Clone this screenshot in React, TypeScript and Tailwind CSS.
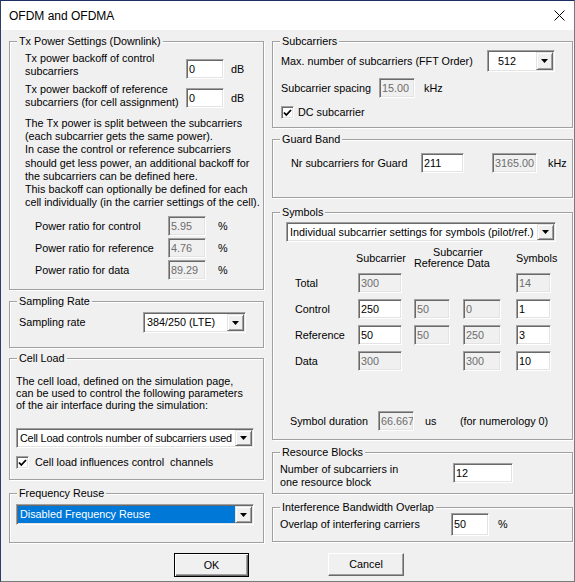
import React from 'react'

const sunken =
  'border border-t-[#a0a0a0] border-l-[#a0a0a0] border-r-white border-b-white shadow-[inset_1px_1px_0_#696969,inset_-1px_-1px_0_#e3e3e3]'
const raised =
  'border border-t-[#e3e3e3] border-l-[#e3e3e3] border-r-[#696969] border-b-[#696969] shadow-[inset_1px_1px_0_#fff,inset_-1px_-1px_0_#a0a0a0]'

type FieldProps = { value: string; className: string; disabled?: boolean }

const Field = ({ value, className, disabled }: FieldProps) => (
  <div
    className={`${sunken} ${className} ${
      disabled ? 'bg-[#f0f0f0] text-[#6d6d6d]' : 'bg-white text-black'
    } flex shrink-0 items-center overflow-hidden whitespace-nowrap pl-[2px]`}
  >
    {value}
  </div>
)

type ComboProps = { value: string; className: string; textClass?: string; selected?: boolean }

const Combo = ({ value, className, textClass = 'pl-[2px]', selected }: ComboProps) => (
  <div className={`${sunken} ${className} flex shrink-0 bg-white p-[1px]`}>
    <div
      className={`flex flex-1 items-center overflow-hidden whitespace-nowrap ${textClass} ${
        selected ? 'bg-[#0078d7] text-white' : ''
      }`}
    >
      {value}
    </div>
    <div className={`${raised} flex w-[17px] items-center justify-center bg-[#f0f0f0]`}>
      <svg width="7" height="4" viewBox="0 0 7 4">
        <path d="M0 0h7L3.5 4z" fill="#000" />
      </svg>
    </div>
  </div>
)

const Check = () => (
  <div className={`${sunken} flex h-[13px] w-[13px] shrink-0 items-center justify-center bg-white`}>
    <svg width="9" height="8" viewBox="0 0 9 8">
      <path d="M1 3.5l2.3 2.5L8 1" fill="none" stroke="#000" strokeWidth="1.8" />
    </svg>
  </div>
)

type GroupProps = { title: string; className: string; children?: React.ReactNode }

const Group = ({ title, className, children }: GroupProps) => (
  <div
    className={`relative shrink-0 border border-[#a0a0a0] shadow-[inset_1px_1px_0_#fff,1px_1px_0_#fff] ${className}`}
  >
    <span className="absolute -top-[7px] left-[7px] whitespace-nowrap bg-[#f0f0f0] px-[2px] leading-[13px]">
      {title}
    </span>
    {children}
  </div>
)

const powerRows = [
  ['Power ratio for control', '5.95'],
  ['Power ratio for reference', '4.76'],
  ['Power ratio for data', '89.29'],
]

const App = () => {
  return (
    <div className="flex h-[582px] w-[575px] flex-col overflow-hidden border border-t-[#1c2f63] border-l-[#2e3d66] border-r-[#7a7a7a] border-b-[#7a7a7a] bg-[#f0f0f0] font-['Liberation_Sans',Arial,sans-serif] text-[10.8px] text-black">
      {/* title bar */}
      <div className="flex h-[29px] shrink-0 items-center justify-between bg-white pl-[8px] pr-[9px]">
        <span className="text-[12px]">OFDM and OFDMA</span>
        <svg width="11" height="11" viewBox="0 0 11 11">
          <path d="M0.5 0.5l10 10M10.5 0.5l-10 10" stroke="#000" strokeWidth="1" />
        </svg>
      </div>

      <div className="flex gap-[8px] pl-[8px]">
        {/* left column */}
        <div className="flex w-[255px] flex-col">
          <Group title="Tx Power Settings (Downlink)" className="mt-[11px] h-[249px] pl-[15px] pt-[10px]">
            <div className="flex">
              <div className="w-[161px] whitespace-nowrap leading-[13px]">
                Tx power backoff of control
                <br />
                subcarriers
              </div>
              <div className="mt-[7px] flex items-center">
                <Field value="0" className="h-[20px] w-[38px]" />
                <span className="ml-[7px]">dB</span>
              </div>
            </div>
            <div className="mt-[4px] flex">
              <div className="w-[161px] whitespace-nowrap leading-[13px]">
                Tx power backoff of reference
                <br />
                subcarriers (for cell assignment)
              </div>
              <div className="mt-[4px] flex items-center">
                <Field value="0" className="h-[20px] w-[38px]" />
                <span className="ml-[7px]">dB</span>
              </div>
            </div>
            <p className="mt-[8px] whitespace-nowrap leading-[13.2px]">
              The Tx power is split between the subcarriers
              <br />
              (each subcarrier gets the same power).
              <br />
              In case the control or reference subcarriers
              <br />
              should get less power, an additional backoff for
              <br />
              the subcarriers can be defined here.
              <br />
              This backoff can optionally be defined for each
              <br />
              cell individually (in the carrier settings of the cell).
            </p>
            <div className="mt-[7px] flex flex-col gap-[2px]">
              {powerRows.map(([label, value]) => (
                <div key={label} className="flex h-[20px] items-center">
                  <span className="ml-[10px] w-[133px] whitespace-nowrap">{label}</span>
                  <Field value={value} disabled className="h-[20px] w-[38px]" />
                  <span className="ml-[12px]">%</span>
                </div>
              ))}
            </div>
          </Group>

          <Group title="Sampling Rate" className="mt-[11px] h-[47px] pl-[9px] pt-[10px]">
            <div className="flex items-center">
              <span className="w-[124px]">Sampling rate</span>
              <Combo value="384/250 (LTE)" className="h-[21px] w-[103px]" />
            </div>
          </Group>

          <Group title="Cell Load" className="mt-[10px] h-[122px] pl-[6px] pt-[16px]">
            <p className="whitespace-nowrap leading-[12px]">
              The cell load, defined on the simulation page,
              <br />
              can be used to control the following parameters
              <br />
              of the air interface during the simulation:
            </p>
            <Combo
              value="Cell Load controls number of subcarriers used"
              textClass="pl-[2px] tracking-[-0.2px]"
              className="mt-[17px] h-[20px] w-[238px]"
            />
            <div className="mt-[8px] flex h-[13px] items-center">
              <Check />
              <span className="ml-[6px] whitespace-pre">Cell load influences control  channels</span>
            </div>
          </Group>

          <Group title="Frequency Reuse" className="mt-[13px] h-[50px] pl-[6px] pt-[10px]">
            <Combo value="Disabled Frequency Reuse" selected className="h-[21px] w-[238px]" />
          </Group>
        </div>

        {/* right column */}
        <div className="flex w-[301px] flex-col">
          <Group title="Subcarriers" className="mt-[11px] h-[87px] pl-[8px] pt-[8px]">
            <div className="flex items-center">
              <span className="w-[206px] whitespace-nowrap">Max. number of subcarriers (FFT Order)</span>
              <Combo value="512" textClass="pl-[9px]" className="h-[22px] w-[68px]" />
            </div>
            <div className="mt-[6px] flex items-center">
              <span className="w-[98px] whitespace-nowrap">Subcarrier spacing</span>
              <Field value="15.00" disabled className="h-[20px] w-[36px]" />
              <span className="ml-[9px]">kHz</span>
            </div>
            <div className="mt-[8px] flex h-[13px] items-center">
              <Check />
              <span className="ml-[4px]">DC subcarrier</span>
            </div>
          </Group>

          <Group title="Guard Band" className="mt-[11px] h-[59px] pl-[18px] pt-[13px]">
            <div className="flex items-center">
              <span className="w-[130px] whitespace-nowrap">Nr subcarriers for Guard</span>
              <Field value="211" className="h-[20px] w-[43px]" />
              <Field value="3165.00" disabled className="ml-[28px] h-[20px] w-[45px]" />
              <span className="ml-[11px]">kHz</span>
            </div>
          </Group>

          <Group title="Symbols" className="mt-[14px] h-[228px] pt-[9px]">
            <Combo
              value="Individual subcarrier settings for symbols (pilot/ref.)"
              className="ml-[13px] h-[20px] w-[270px]"
            />
            <div className="ml-[22px] mt-[5px] grid h-[22px] grid-cols-[63px_56px_49px_53px_35px] items-center">
              <div />
              <div className="-ml-[2px]">Subcarrier</div>
              <div className="col-span-2 leading-[11px]">
                <div className="pl-[19px]">Subcarrier</div>
                <div className="flex">
                  <span className="w-[53px]">Reference</span>
                  <span>Data</span>
                </div>
              </div>
              <div>Symbols</div>
            </div>
            <div className="ml-[22px] mt-[4px] grid grid-cols-[63px_56px_49px_53px_35px] grid-rows-[20px_20px_20px_20px] items-center gap-y-[6px]">
              <span>Total</span>
              <Field value="300" disabled className="h-[20px] w-[44px]" />
              <div />
              <div />
              <Field value="14" disabled className="h-[20px] w-[35px]" />

              <span>Control</span>
              <Field value="250" className="h-[20px] w-[44px]" />
              <Field value="50" disabled className="h-[20px] w-[36px]" />
              <Field value="0" disabled className="h-[20px] w-[38px]" />
              <Field value="1" className="h-[20px] w-[35px]" />

              <span>Reference</span>
              <Field value="50" className="h-[20px] w-[44px]" />
              <Field value="50" disabled className="h-[20px] w-[36px]" />
              <Field value="250" disabled className="h-[20px] w-[38px]" />
              <Field value="3" className="h-[20px] w-[35px]" />

              <span>Data</span>
              <Field value="300" disabled className="h-[20px] w-[44px]" />
              <div />
              <Field value="300" disabled className="h-[20px] w-[38px]" />
              <Field value="10" className="h-[20px] w-[35px]" />
            </div>
            <div className="ml-[17px] mt-[40px] flex items-center">
              <span className="w-[88px] whitespace-nowrap">Symbol duration</span>
              <Field value="66.667" disabled className="h-[20px] w-[36px]" />
              <span className="ml-[11px] w-[35px]">us</span>
              <span className="whitespace-nowrap">(for numerology 0)</span>
            </div>
          </Group>

          <Group title="Resource Blocks" className="mt-[12px] h-[42px] pl-[7px] pt-[10px]">
            <div className="flex items-start">
              <div className="w-[173px] whitespace-nowrap leading-[13px]">
                Number of subcarriers in
                <br />
                one resource block
              </div>
              <Field value="12" className="h-[20px] w-[60px]" />
            </div>
          </Group>

          <Group title="Interference Bandwidth Overlap" className="mt-[13px] h-[35px] pl-[7px] pt-[5px]">
            <div className="flex items-center">
              <span className="w-[171px] whitespace-nowrap">Overlap of interfering carriers</span>
              <Field value="50" className="h-[23px] w-[38px]" />
              <span className="ml-[9px]">%</span>
            </div>
          </Group>
        </div>
      </div>

      {/* buttons */}
      <div className="mt-[10px] flex pl-[173px]">
        <button className="flex h-[24px] w-[75px] items-center justify-center border border-black bg-[#f0f0f0] shadow-[inset_1px_1px_0_#fff,inset_-1px_-1px_0_#696969,inset_-2px_-2px_0_#a0a0a0]">
          OK
        </button>
        <button className="ml-[79px] flex h-[23px] w-[76px] items-center justify-center border border-t-white border-l-white border-r-[#696969] border-b-[#696969] bg-[#f0f0f0] shadow-[inset_-1px_-1px_0_#a0a0a0]">
          Cancel
        </button>
      </div>
    </div>
  )
}

export default App
